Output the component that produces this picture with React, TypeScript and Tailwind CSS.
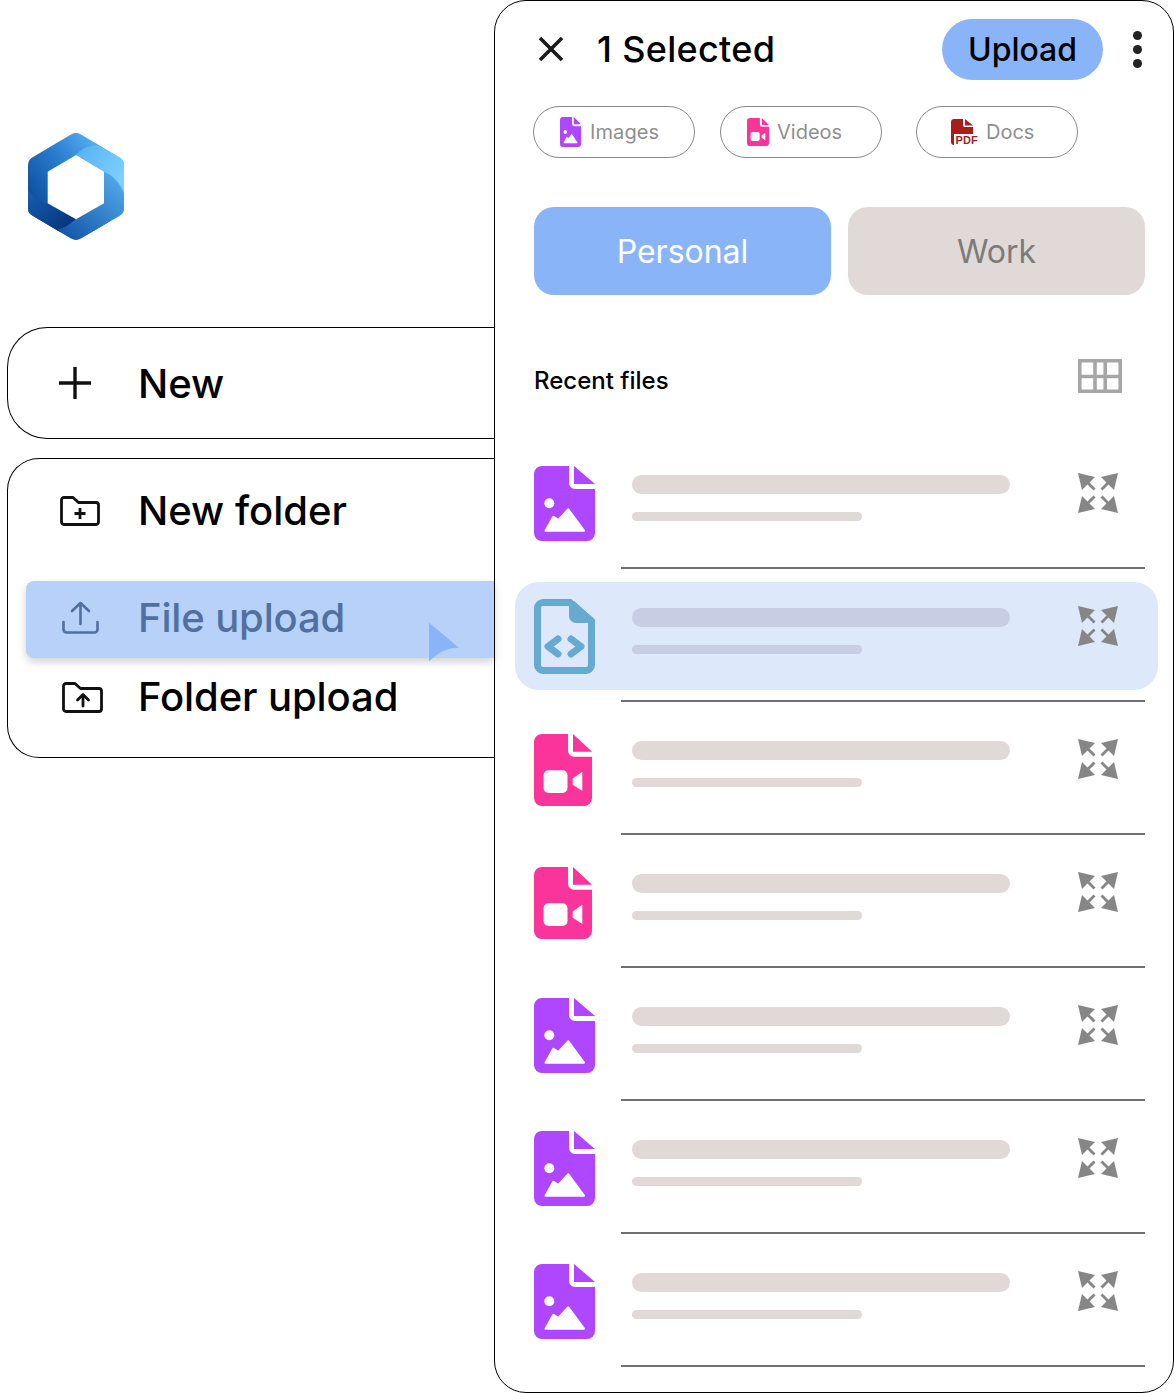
import React from 'react';

const PURPLE = '#AE47FF';
const PINK = '#FB349C';
const BLUE = '#66AAD2';
const RED = '#A81C1C';

const ImageFile = ({ className }: { className: string }) => (
  <svg viewBox="0 0 61 75" preserveAspectRatio="none" className={className}>
    <path fill={PURPLE} d="M8 0H35V17a6 6 0 0 0 6 6H61V67a8 8 0 0 1-8 8H8a8 8 0 0 1-8-8V8a8 8 0 0 1 8-8Z" />
    <path fill={PURPLE} d="M40 0 61 18H40Z" />
    <circle cx="15.3" cy="37.3" r="5" fill="#fff" />
    <path fill="#fff" stroke="#fff" strokeWidth="2" strokeLinejoin="round" d="M11.5 64.7 19.3 50.7 24.3 54 34.3 43.3 50 64.7Z" />
  </svg>
);

const VideoFile = ({ className }: { className: string }) => (
  <svg viewBox="0 0 58 73" preserveAspectRatio="none" className={className}>
    <path fill={PINK} d="M8 0H34V17a6 6 0 0 0 6 6H58V65a8 8 0 0 1-8 8H8a8 8 0 0 1-8-8V8a8 8 0 0 1 8-8Z" />
    <path fill={PINK} d="M39 0 58 18H39Z" />
    <rect x="9.5" y="36.7" width="24" height="23" rx="5" fill="#fff" />
    <path fill="#fff" d="M38.7 45 48.3 38.4V57.7L38.7 51.5Z" />
  </svg>
);

const CodeFile = ({ className }: { className: string }) => (
  <svg viewBox="0 0 61 75" className={className}>
    <path fill="none" stroke={BLUE} strokeWidth="7" d="M9 3.5H36L57.5 22V66a5.5 5.5 0 0 1-5.5 5.5H9A5.5 5.5 0 0 1 3.5 66V9A5.5 5.5 0 0 1 9 3.5Z" />
    <path fill={BLUE} d="M35 2H40L60 20V24H42a7 7 0 0 1-7-7Z" />
    <path fill="none" stroke={BLUE} strokeWidth="7" strokeLinecap="round" strokeLinejoin="round" d="M24 40 14 47.5 24 55M37 40 47 47.5 37 55" />
  </svg>
);

const PdfFile = () => (
  <div className="relative h-[26px] w-[27px] shrink-0">
    <svg viewBox="0 0 22 26" className="absolute left-0 top-0 h-[26px] w-[22px]">
      <path fill={RED} d="M3 0H12V6a2 2 0 0 0 2 2H22V26H3a3 3 0 0 1-3-3V3a3 3 0 0 1 3-3Z" />
      <path fill={RED} d="M14 0 22 6.5H14Z" />
    </svg>
    <span className="absolute bottom-[-1px] right-0 bg-white pl-px text-[11px] font-bold leading-[12px] tracking-[0.2px] text-[#A81C1C] [font-family:'Liberation_Sans',sans-serif]">
      PDF
    </span>
  </div>
);

const ArrowsOut = () => (
  <svg viewBox="0 0 40 40" className="h-[40px] w-[40px]">
    {[0, 90, 180, 270].map((r) => (
      <g key={r} transform={`rotate(${r} 20 20)`} fill="#868686">
        <path d="M0 0 17 4 4 17Z" />
        <path d="M9 7 17.5 15.5 15.5 17.5 7 9Z" />
      </g>
    ))}
  </svg>
);

const GridIcon = () => (
  <svg viewBox="0 0 44 34" className="h-[34px] w-[44px]">
    <path fill="none" stroke="#A6A6A6" strokeWidth="3.6" d="M1.8 1.8H42.2V32.2H1.8ZM17 2V32M27.2 2V32M2 17.5H42" />
  </svg>
);

const Logo = () => (
  <svg viewBox="0 0 96 107" className="h-[107px] w-[96px]">
    <defs>
      <linearGradient id="base" x1="0.1" y1="0.7" x2="0.85" y2="0.1">
        <stop offset="0" stopColor="#0F4F9F" />
        <stop offset="0.5" stopColor="#2A7FD0" />
        <stop offset="1" stopColor="#62BBF6" />
      </linearGradient>
      <linearGradient id="light" x1="0" y1="0" x2="1" y2="0.6">
        <stop offset="0" stopColor="#52B0EF" />
        <stop offset="1" stopColor="#7DD0FF" />
      </linearGradient>
      <linearGradient id="right" x1="1" y1="0.1" x2="0.2" y2="1">
        <stop offset="0" stopColor="#55ACEC" />
        <stop offset="1" stopColor="#1459AB" />
      </linearGradient>
      <linearGradient id="dark" x1="0" y1="0" x2="0.9" y2="0.8">
        <stop offset="0" stopColor="#1560B0" />
        <stop offset="1" stopColor="#07347D" />
      </linearGradient>
      <clipPath id="hex">
        <path d="M43 1.5a10 10 0 0 1 10 0L91 24a9 9 0 0 1 5 8V75a9 9 0 0 1-5 8L53 105.5a10 10 0 0 1-10 0L5 83a9 9 0 0 1-5-8V32a9 9 0 0 1 5-8Z" />
      </clipPath>
    </defs>
    <g clipPath="url(#hex)">
      <rect width="96" height="107" fill="url(#base)" />
      <path fill="url(#dark)" d="M0 57C5 65 12 68 20 71L48 86 30 100 0 84Z" />
      <path fill="url(#right)" d="M76 38.7C85 42 92 50 96 60V84L48 107 30 97C38 94 44 90 48 86L76 70Z" />
      <path fill="url(#light)" d="M48 22C54 15 62 11 72 13L96 27V60C92 50 85 42 76 38.7Z" />
    </g>
    <path fill="#fff" d="M48 22 76 38.7V70.3L48 86.3 19.7 70.3V38.7Z" />
  </svg>
);

const FileRow = ({ kind, active }: { kind: 'image' | 'video' | 'code'; active?: boolean }) => {
  const bar = active ? 'bg-[#C7CEE3]' : 'bg-[#E0D9D7]';
  return (
    <div className="flex h-[133px] flex-col pt-[13px]">
      <div className={`ml-[-19px] flex h-[108px] w-[643px] shrink-0 rounded-[24px] pl-[19px] ${active ? 'bg-[#DEE8FB]' : ''}`}>
        <div className="w-[98px] shrink-0">
          {kind === 'image' && <ImageFile className="mt-[17px] h-[75px] w-[61px]" />}
          {kind === 'code' && <CodeFile className="mt-[17px] h-[75px] w-[61px]" />}
          {kind === 'video' && <VideoFile className="mt-[19px] h-[72px] w-[58px]" />}
        </div>
        <div className="w-[378px] pt-[26px]">
          <div className={`h-[19px] w-[378px] rounded-full ${bar}`} />
          <div className={`mt-[18px] h-[9px] w-[230px] rounded-full ${bar}`} />
        </div>
        <div className="ml-[68px] pt-[24px]">
          <ArrowsOut />
        </div>
      </div>
      <div className="ml-[87px] mt-[10px] h-[2px] w-[524px] shrink-0 bg-[#707070]" />
    </div>
  );
};

const Chip = ({ className, children }: { className: string; children: React.ReactNode }) => (
  <div className={`flex h-[52px] w-[162px] items-center rounded-full border border-[#8a8a8a] text-[20px] text-[#8f8f8f] ${className}`}>
    {children}
  </div>
);

export default function App() {
  return (
    <div className="flex h-[1393px] w-[1174px] overflow-hidden bg-white text-black [font-family:Inter,sans-serif]">
      <div className="w-[494px] shrink-0 pl-[7px]">
        <div className="ml-[21px] pt-[133px]">
          <Logo />
        </div>
        <div className="mt-[87px] flex h-[112px] items-center rounded-l-[40px] border border-r-0 border-black pl-[50px]">
          <svg viewBox="0 0 34 34" className="h-[34px] w-[34px] shrink-0">
            <path fill="none" stroke="#111" strokeWidth="3.4" d="M17 1V33M1 17H33" />
          </svg>
          <span className="ml-[46px] mt-[1px] text-[40px] font-[450] leading-none">New</span>
        </div>
        <div className="relative mt-[19px] h-[300px] rounded-l-[32px] border border-r-0 border-black pt-[17px]">
          <div className="flex h-[70px] items-center pl-[52px]">
            <svg viewBox="0 0 40 30" className="h-[30px] w-[40px] shrink-0">
              <path fill="none" stroke="#111" strokeWidth="2.8" strokeLinejoin="round" d="M4 1.5H13L18.5 6.5H36a2.5 2.5 0 0 1 2.5 2.5V26a2.5 2.5 0 0 1-2.5 2.5H4A2.5 2.5 0 0 1 1.5 26V4A2.5 2.5 0 0 1 4 1.5ZM20 12V23M14.5 17.5H25.5" />
            </svg>
            <span className="ml-[38px] text-[40px] font-[450] leading-none">New folder</span>
          </div>
          <div className="ml-[18px] mt-[35px] flex h-[77px] items-center rounded-l-[8px] bg-[#B7D1F9] pb-[3px] pl-[36px] text-[#51709F] shadow-[0_4px_8px_rgba(0,0,0,0.18)]">
            <svg viewBox="0 0 37 33" className="mb-[1px] h-[33px] w-[37px] shrink-0">
              <path fill="none" stroke="#51709F" strokeWidth="2.6" strokeLinecap="round" strokeLinejoin="round" d="M18.5 2V23M10 10 18.5 2 27 10M1.5 21V28.5a3 3 0 0 0 3 3H32.5a3 3 0 0 0 3-3V21" />
            </svg>
            <span className="ml-[39px] text-[40px] font-[450] leading-none tracking-[-0.15px]">File upload</span>
          </div>
          <div className="flex h-[78px] items-center pl-[54px]">
            <svg viewBox="0 0 41 31" className="h-[31px] w-[41px] shrink-0">
              <path fill="none" stroke="#111" strokeWidth="2.8" strokeLinejoin="round" d="M4 1.5H13L18.5 6.5H37a2.5 2.5 0 0 1 2.5 2.5V27a2.5 2.5 0 0 1-2.5 2.5H4A2.5 2.5 0 0 1 1.5 27V4A2.5 2.5 0 0 1 4 1.5Z" />
              <path fill="none" stroke="#111" strokeWidth="2.8" strokeLinecap="round" strokeLinejoin="round" d="M21 24V13M15.5 18 21 12.5 26.5 18" />
            </svg>
            <span className="ml-[35px] text-[40px] font-[450] leading-none tracking-[-0.1px]">Folder upload</span>
          </div>
          <svg viewBox="0 0 31 40" className="absolute left-[421px] top-[163px] h-[40px] w-[30px]">
            <path fill="#8AB4F8" d="M0 0 31 26C20 26 12 29 0 40Z" />
          </svg>
        </div>
      </div>

      <div className="h-[1393px] w-[680px] shrink-0 rounded-[32px] border border-black bg-white pl-[39px]">
        <div className="flex h-[105px] items-start">
          <svg viewBox="0 0 26 26" className="ml-[4px] mt-[35px] h-[26px] w-[26px] shrink-0">
            <path fill="none" stroke="#1a1a1a" strokeWidth="3.6" d="M2 2 24 24M24 2 2 24" />
          </svg>
          <span className="ml-[33px] mt-[28px] w-[177px] shrink-0 whitespace-nowrap text-[36px] font-[450] leading-[40px] tracking-[0.3px]">1 Selected</span>
          <button className="ml-[168px] mt-[18px] flex h-[61px] w-[161px] shrink-0 items-center justify-center rounded-full bg-[#8AB4F8] text-[32px] font-[450]">
            Upload
          </button>
          <div className="ml-[30px] mt-[30px] flex flex-col gap-[5px]">
            <span className="h-[9px] w-[9px] rounded-full bg-[#222]" />
            <span className="h-[9px] w-[9px] rounded-full bg-[#222]" />
            <span className="h-[9px] w-[9px] rounded-full bg-[#222]" />
          </div>
        </div>

        <div className="flex">
          <Chip className="ml-[-1px] pl-[26px]">
            <ImageFile className="h-[30px] w-[21px] shrink-0" />
            <span className="ml-[9px] tracking-[0.1px]">Images</span>
          </Chip>
          <Chip className="ml-[25px] pl-[26px]">
            <VideoFile className="h-[28px] w-[22px] shrink-0" />
            <span className="ml-[8px]">Videos</span>
          </Chip>
          <Chip className="ml-[34px] pl-[34px]">
            <PdfFile />
            <span className="ml-[8px]">Docs</span>
          </Chip>
        </div>

        <div className="mt-[49px] flex gap-[17px] text-[32px]">
          <div className="flex h-[88px] w-[297px] items-center justify-center rounded-[20px] bg-[#8AB4F8] pt-[2px] text-white">Personal</div>
          <div className="flex h-[88px] w-[297px] items-center justify-center rounded-[20px] bg-[#E0D9D7] pt-[2px] text-[#7b7b7b]">Work</div>
        </div>

        <div className="mt-[64px] flex h-[34px] items-start">
          <span className="mt-[7px] w-[134px] shrink-0 whitespace-nowrap text-[24px] font-[450] leading-[29px]">Recent files</span>
          <div className="ml-[410px]">
            <GridIcon />
          </div>
        </div>

        <div className="mt-[43px]">
          <FileRow kind="image" />
          <FileRow kind="code" active />
          <FileRow kind="video" />
          <FileRow kind="video" />
          <FileRow kind="image" />
          <FileRow kind="image" />
          <FileRow kind="image" />
        </div>
      </div>
    </div>
  );
}
